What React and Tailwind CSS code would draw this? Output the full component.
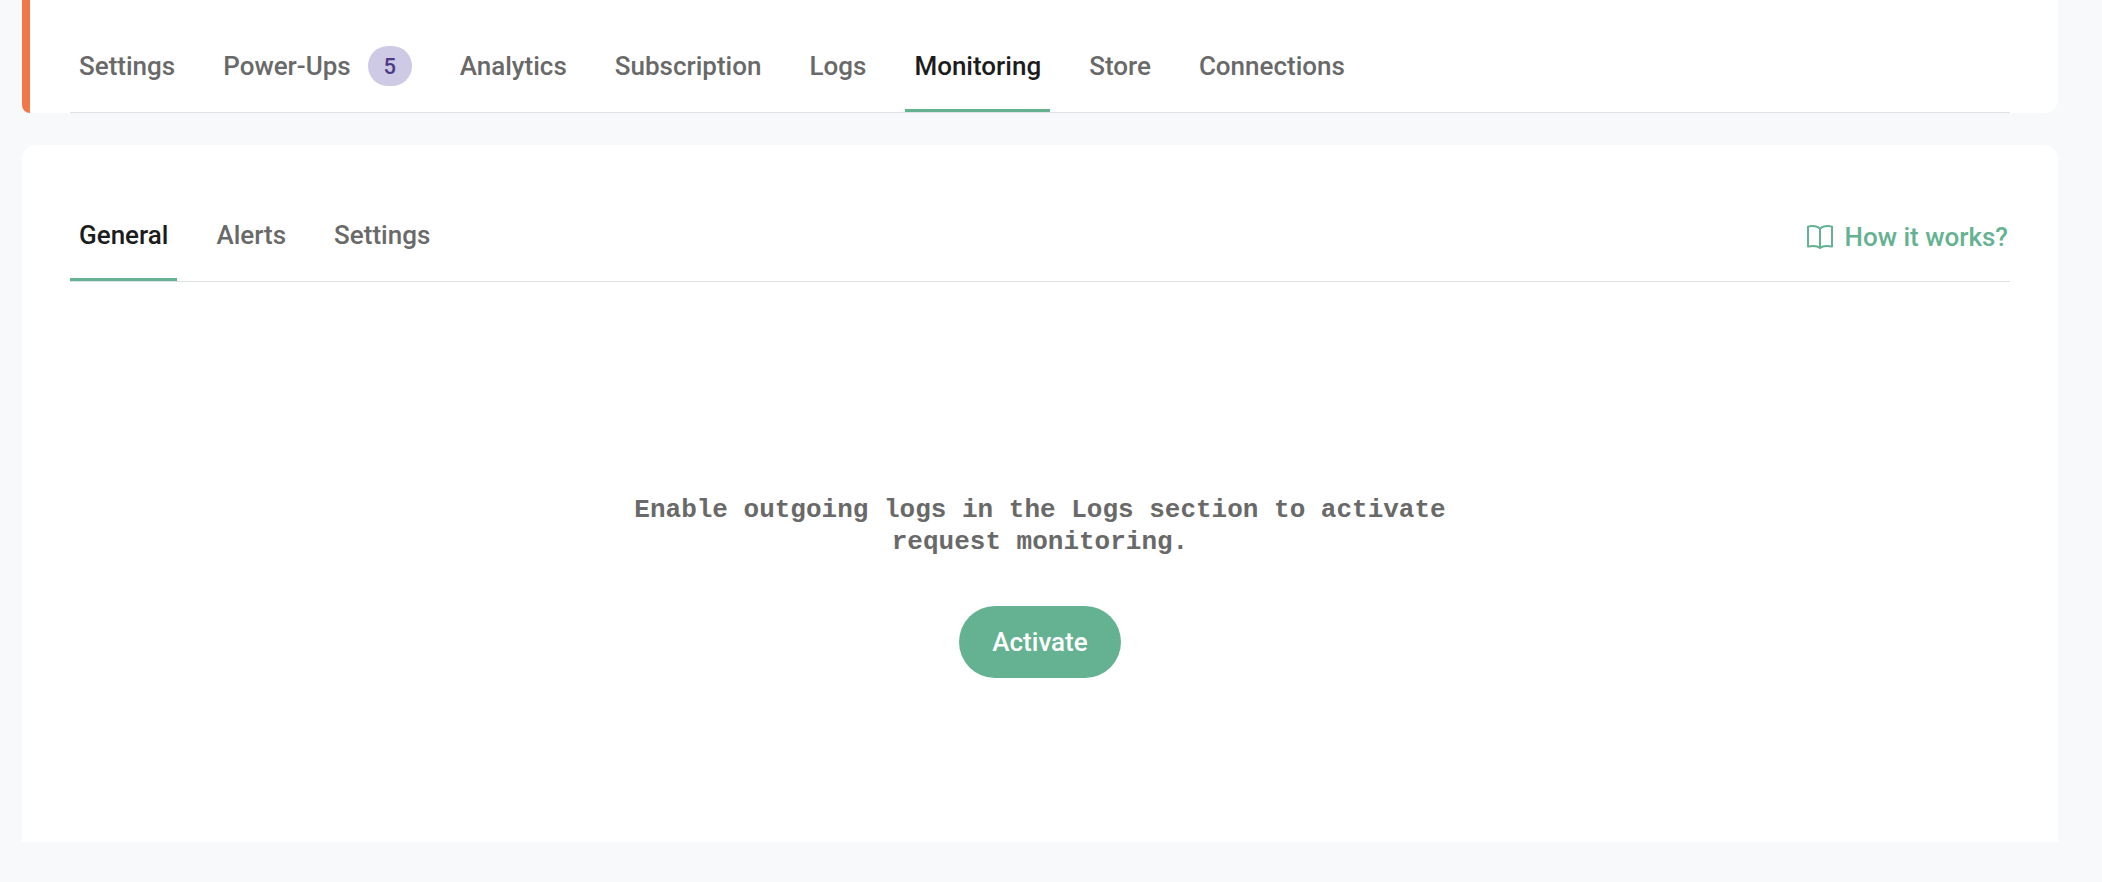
import React, { useState } from 'react';
import clsx from 'clsx';

const mainTabs = [
  { id: 'settings', label: 'Settings' },
  { id: 'power-ups', label: 'Power-Ups', count: 5 },
  { id: 'analytics', label: 'Analytics' },
  { id: 'subscription', label: 'Subscription' },
  { id: 'logs', label: 'Logs' },
  { id: 'monitoring', label: 'Monitoring' },
  { id: 'store', label: 'Store' },
  { id: 'connections', label: 'Connections' },
];

const monitoringTabs = [
  { id: 'general', label: 'General' },
  { id: 'alerts', label: 'Alerts' },
  { id: 'settings', label: 'Settings' },
];

const Tabs = ({ items, active, onChange, label }) => (
  <div role="tablist" aria-label={label} className="flex gap-[30px]">
    {items.map(item => (
      <button
        key={item.id}
        type="button"
        role="tab"
        aria-selected={item.id === active}
        onClick={() => onChange(item.id)}
        className={clsx(
          'flex h-[92px] cursor-pointer items-center gap-[17px] border-b-[3px] px-[9px] pt-[3px]',
          item.id === active
            ? 'border-[#64b291] text-[#1c1c1c]'
            : 'border-transparent text-[#696969] hover:text-[#1c1c1c]'
        )}
      >
        {item.label}
        {item.count && (
          <span className="flex h-10 w-11 items-center justify-center rounded-[20px] bg-[#cec9e4] pt-0.5 text-[22px] text-[#4b3b86]">
            {item.count}
          </span>
        )}
      </button>
    ))}
  </div>
);

const BookIcon = () => (
  <svg
    className="h-[26px] w-7"
    viewBox="0 0 28 26"
    fill="none"
    stroke="currentColor"
    strokeWidth="2"
    strokeLinejoin="round"
    aria-hidden="true"
  >
    <path d="M14 4.8C12 2.4 6.5 1.2 2 2.6V22.6C7 21.6 11.5 21.8 14 24C16.5 21.8 21 21.6 26 22.6V2.6C21.5 1.2 16 2.4 14 4.8Z" />
    <path d="M14 4.8V24" />
  </svg>
);

const App = () => {
  const [tab, setTab] = useState('monitoring');
  const [subTab, setSubTab] = useState('general');

  return (
    <div className="min-h-screen bg-[#f8f9fb] pr-11 pl-[22px] font-['Roboto','Noto_Sans',sans-serif] text-[26px] leading-8 font-medium">
      {/* header */}
      <header className="flex overflow-hidden rounded-br-[14px] rounded-bl-lg bg-white">
        <div className="w-2 bg-[#ef7748]"></div>
        <div className="flex-1 pt-5 pr-12 pl-10">
          <nav className="border-b border-[#dfe1e5]">
            <Tabs items={mainTabs} active={tab} onChange={setTab} label="Scenario" />
          </nav>
        </div>
      </header>

      {/* content */}
      <main className="mt-8 rounded-t-[14px] bg-white px-12 pt-11 pb-[164px]">
        <div className="flex items-center justify-between border-b border-[#dfe1e5]">
          <Tabs items={monitoringTabs} active={subTab} onChange={setSubTab} label="Monitoring" />
          <a href="#how-it-works" className="flex items-center gap-2.5 pt-1 pr-0.5 text-[#64b291] hover:underline">
            <BookIcon />
            How it works?
          </a>
        </div>
        <section className="flex flex-col items-center gap-12 pt-[212px]">
          <p className="max-w-[840px] text-center font-['Liberation_Mono',monospace] font-bold text-[#696969]">
            Enable outgoing logs in the Logs section to activate request monitoring.
          </p>
          <button
            type="button"
            className="h-[72px] cursor-pointer rounded-full bg-[#64b291] px-[33px] text-white hover:bg-[#559f80]"
          >
            Activate
          </button>
        </section>
      </main>
    </div>
  );
};

export default App;
